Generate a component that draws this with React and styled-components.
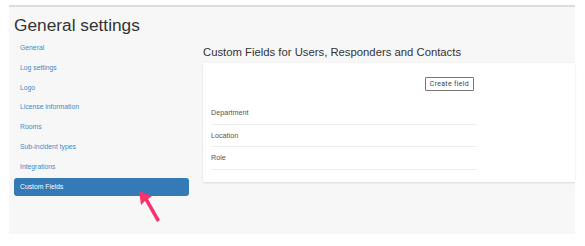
import React from "react";
import styled, { createGlobalStyle } from "styled-components";

const Global = createGlobalStyle`
  html, body { margin: 0; padding: 0; background: #fff; }
  body { font-family: "Helvetica Neue", "Liberation Sans", Arial, sans-serif; }
`;

const Page = styled.div`
  width: 585px;
  height: 246px;
  padding: 5px 10px 12px 9px;
  box-sizing: border-box;
  overflow: hidden;
`;

const Panel = styled.div`
  background: #f7f7f7;
  border-top: 2px solid #dcdcdc;
  height: 229px;
  box-sizing: border-box;
  padding: 6.5px 0 0 5px;
  display: flex;
  flex-direction: column;
  position: relative;
`;

const Title = styled.h1`
  margin: 0;
  font-size: 17.3px;
  font-weight: 400;
  color: #333;
  line-height: 22px;
`;

const Body = styled.div`
  display: grid;
  grid-template-columns: 175px 1fr;
  column-gap: 14px;
  margin-top: 3.5px;
`;

const Nav = styled.nav`
  display: flex;
  flex-direction: column;
`;

const NavItem = styled.a`
  display: block;
  height: 18px;
  margin-bottom: 1.8px;
  padding: 0 6px;
  line-height: 18px;
  font-size: 6.8px;
  color: ${p => (p.$active ? "#fff" : "#4189c9")};
  background: ${p => (p.$active ? "#337ab7" : "transparent")};
  border-radius: 3px;
  text-decoration: none;
`;

const Main = styled.div`
  display: flex;
  flex-direction: column;
  padding-top: 6px;
`;

const Heading = styled.h2`
  margin: 0 0 3px 0;
  font-size: 11.3px;
  font-weight: 400;
  color: #333;
  line-height: 15px;
`;

const Card = styled.div`
  background: #fff;
  box-shadow: 0 1px 2px rgba(0,0,0,0.12);
  padding: 14px 98px 12px 8px;
  display: flex;
  flex-direction: column;
`;

const Toolbar = styled.div`
  display: flex;
  justify-content: flex-end;
  padding-right: 3px;
  margin-bottom: 11px;
`;

const Button = styled.button`
  font-family: Roboto, "Liberation Sans", sans-serif;
  font-size: 7px;
  letter-spacing: 0.3px;
  color: #444;
  background: #fff;
  border: 1px solid #777;
  border-radius: 1px;
  height: 14px;
  padding: 0 4px;
  line-height: 12px;
`;

const Row = styled.div`
  font-size: 7.2px;
  color: #555;
  height: 21.5px;
  line-height: 21.5px;
  border-bottom: 1px solid #eee;
`;

const Arrow = styled.svg`
  position: absolute;
  left: 128px;
  top: 182.5px;
`;

export default function App() {
  const items = ["General", "Log settings", "Logo", "License information", "Rooms", "Sub-incident types", "Integrations", "Custom Fields"];
  return (
    <Page>
      <Global />
      <Panel>
        <Title>General settings</Title>
        <Body>
          <Nav>
            {items.map(i => (
              <NavItem key={i} $active={i === "Custom Fields"}>{i}</NavItem>
            ))}
          </Nav>
          <Main>
            <Heading>Custom Fields for Users, Responders and Contacts</Heading>
            <Card>
              <Toolbar><Button>Create field</Button></Toolbar>
              <Row>Department</Row>
              <Row>Location</Row>
              <Row>Role</Row>
            </Card>
          </Main>
        </Body>
        <Arrow width="40" height="45" viewBox="0 0 40 45">
          <path d="M2 1 L15 6 L11 9 L23 30 L20 32 L8 11 L4 15 Z" fill="#f5336e" />
        </Arrow>
      </Panel>
    </Page>
  );
}
